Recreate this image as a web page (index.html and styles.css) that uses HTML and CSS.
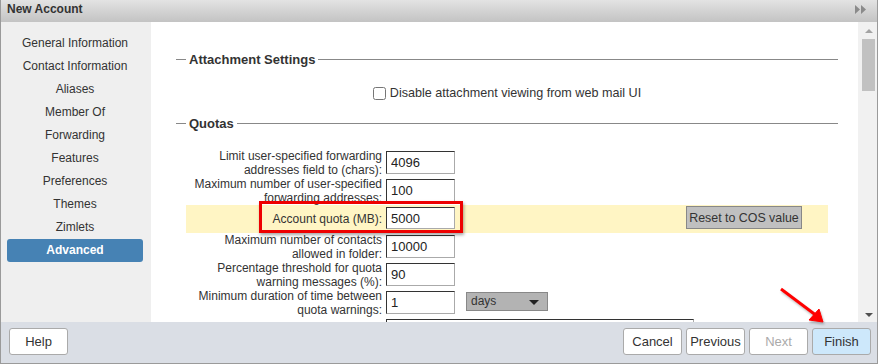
FILE: index.html
```html
<!DOCTYPE html>
<html lang="en">
<head>
    <meta charset="UTF-8">
    <title>New Account</title>
    <link rel="stylesheet" href="styles.css">
</head>
<body>
    <div class="dialog">
        <div class="titlebar">
            <span class="title">New Account</span>
            <svg class="expand" width="12" height="9" viewBox="0 0 12 9"><path d="M0 0 L5 4.5 L0 9 Z M6 0 L11 4.5 L6 9 Z" fill="#8a8a8a"/></svg>
        </div>
        <div class="main">
            <ul class="sidebar">
                <li>General Information</li>
                <li>Contact Information</li>
                <li>Aliases</li>
                <li>Member Of</li>
                <li>Forwarding</li>
                <li>Features</li>
                <li>Preferences</li>
                <li>Themes</li>
                <li>Zimlets</li>
                <li class="active">Advanced</li>
            </ul>
            <div class="content">
                <div class="section-head"><span class="dash"></span><span class="legend">Attachment Settings</span><span class="rule"></span></div>
                <label class="check-row"><input type="checkbox"> Disable attachment viewing from web mail UI</label>
                <div class="section-head"><span class="dash"></span><span class="legend">Quotas</span><span class="rule"></span></div>
                <div class="form">
                    <div class="row">
                        <div class="label">Limit user-specified forwarding<br>addresses field to (chars):</div>
                        <div class="field"><input class="num" value="4096"></div>
                        <div class="extra"></div>
                    </div>
                    <div class="row">
                        <div class="label">Maximum number of user-specified<br>forwarding addresses:</div>
                        <div class="field"><input class="num" value="100"></div>
                        <div class="extra"></div>
                    </div>
                    <div class="row highlight">
                        <div class="label">Account quota (MB):</div>
                        <div class="field"><input class="num" value="5000"></div>
                        <div class="extra"><button class="reset">Reset to COS value</button></div>
                    </div>
                    <div class="row">
                        <div class="label">Maximum number of contacts<br>allowed in folder:</div>
                        <div class="field"><input class="num" value="10000"></div>
                        <div class="extra"></div>
                    </div>
                    <div class="row">
                        <div class="label">Percentage threshold for quota<br>warning messages (%):</div>
                        <div class="field"><input class="num" value="90"></div>
                        <div class="extra"></div>
                    </div>
                    <div class="row">
                        <div class="label">Minimum duration of time between<br>quota warnings:</div>
                        <div class="field"><input class="num" value="1"></div>
                        <div class="extra"><div class="select">days<span class="caret"></span></div></div>
                    </div>
                    <div class="row">
                        <div class="label"></div>
                        <div class="field wide"><input class="long" value=""></div>
                    </div>
                </div>
            </div>
            <div class="scrollbar">
                <span class="arrow-up"></span>
                <span class="thumb"></span>
                <span class="spacer"></span>
                <span class="arrow-down"></span>
            </div>
        </div>
        <div class="footer">
            <button class="btn">Help</button>
            <div class="nav">
                <button class="btn">Cancel</button>
                <button class="btn">Previous</button>
                <button class="btn disabled">Next</button>
                <button class="btn primary">Finish</button>
            </div>
        </div>

        <div class="callout"></div>
        <svg class="pointer" width="60" height="45" viewBox="0 0 60 45">
            <g fill="#f00" stroke="#f00">
                <line x1="2" y1="2" x2="38" y2="29" stroke-width="3"/>
                <path d="M44 35 L30 33 L40 22 Z" stroke-width="1"/>
            </g>
        </svg>
    </div>
</body>
</html>
```
FILE: styles.css
```css
* {
    box-sizing: border-box;
}
body {
    margin: 0;
    font-family: "Liberation Sans", Arial, sans-serif;
    font-size: 12px;
    color: #333;
    background: #fff;
}
.dialog {
    position: relative;
    width: 878px;
    height: 364px;
    display: flex;
    flex-direction: column;
    border: 1px solid #9a9a9a;
    border-top: none;
    overflow: hidden;
}
.titlebar {
    height: 22px;
    flex: none;
    display: flex;
    align-items: center;
    justify-content: space-between;
    padding: 0 10px 0 6px;
    background: linear-gradient(#e3e3e3, #c3c3c3);
}
.title {
    font-weight: bold;
    font-size: 12px;
    color: #333;
    margin-top: -4px;
}
.expand {
    margin-top: -3px;
}
.main {
    height: 300px;
    flex: none;
    display: flex;
}
.sidebar {
    list-style: none;
    margin: 0;
    padding: 10px 0 0;
    width: 150px;
    flex: none;
    background: #efefef;
}
.sidebar li {
    height: 23px;
    line-height: 22px;
    margin: 0 8px 0 6px;
    text-align: center;
    color: #333;
}
.sidebar li.active {
    background: #4682b4;
    color: #fff;
    font-weight: bold;
    border-radius: 3px;
}
.content {
    flex: 1;
    overflow: hidden;
    padding: 28px 20px 0 25px;
}
.section-head {
    display: flex;
    align-items: center;
    height: 18px;
}
.section-head .dash {
    width: 10px;
    border-top: 1px solid #888;
}
.section-head .rule {
    flex: 1;
    border-top: 1px solid #888;
}
.legend {
    font-weight: bold;
    font-size: 13px;
    color: #333;
    padding: 0 3px;
}
.check-row {
    display: flex;
    align-items: center;
    justify-content: center;
    height: 20px;
    margin: 15px 0 11px;
    font-size: 12.6px;
    color: #333;
}
.check-row input {
    width: 13px;
    height: 13px;
    margin: 0 4px 0 0;
}
.form {
    margin: 17px 10px 0 10px;
}
.row {
    display: flex;
    height: 28px;
}
.row.highlight {
    background: #fff5c4;
    position: relative;
}
.label {
    width: 196px;
    flex: none;
    text-align: right;
    line-height: 14px;
    white-space: nowrap;
    color: #333;
}
.highlight .label {
    line-height: 28px;
}
.field {
    width: 70px;
    flex: none;
    margin-left: 4px;
    padding-top: 2px;
}
.field.wide {
    width: 310px;
}
.num, .long {
    width: 69px;
    height: 23px;
    font-family: "Liberation Sans", Arial, sans-serif;
    font-size: 13px;
    color: #222;
    padding: 0 4px;
    border: 1px solid #aaa;
    border-top-color: #333;
    border-left-color: #333;
    background: #fff;
}
.highlight .num {
    height: 22px;
}
.long {
    width: 308px;
}
.extra {
    flex: 1;
    display: flex;
    padding-top: 1px;
}
.highlight .extra {
    justify-content: flex-end;
    padding-right: 26px;
}
.reset {
    height: 23px;
    width: 116px;
    padding: 0;
    white-space: nowrap;
    font-family: "Liberation Sans", Arial, sans-serif;
    font-size: 12.4px;
    color: #333;
    background: #c0c0c0;
    border: 1px solid #888;
}
.select {
    position: relative;
    margin: 2px 0 0 10px;
    width: 82px;
    height: 19px;
    line-height: 17px;
    padding-left: 4px;
    background: #b3b3b3;
    border: 1px solid #888;
    color: #333;
}
.caret {
    position: absolute;
    right: 8px;
    top: 7px;
    border-left: 5px solid transparent;
    border-right: 5px solid transparent;
    border-top: 5px solid #222;
}
.scrollbar {
    width: 19px;
    flex: none;
    background: #f1f1f1;
    display: flex;
    flex-direction: column;
    align-items: center;
    padding: 7px 0 5px 2px;
}
.arrow-up, .arrow-down {
    width: 0;
    height: 0;
    border-left: 4px solid transparent;
    border-right: 4px solid transparent;
}
.arrow-up {
    border-bottom: 4px solid #a3a3a3;
    margin-bottom: 6px;
}
.arrow-down {
    border-top: 4px solid #505050;
}
.thumb {
    width: 13px;
    height: 52px;
    background: #c1c1c1;
}
.spacer {
    flex: 1;
}
.footer {
    flex: 1;
    display: flex;
    justify-content: space-between;
    align-items: center;
    padding: 0 6px 2px 8px;
    background: #dadee5;
}
.nav {
    display: flex;
    gap: 4px;
}
.btn {
    width: 59px;
    height: 27px;
    padding: 0;
    font-family: "Liberation Sans", Arial, sans-serif;
    font-size: 13px;
    color: #333;
    background: #fff;
    border: 1px solid #aaa;
    border-radius: 3px;
}
.btn.disabled {
    color: #aaa;
}
.btn.primary {
    background: #cde8fb;
}
.callout {
    position: absolute;
    left: 258px;
    top: 201px;
    width: 204px;
    height: 32px;
    border: 3px solid #ee0000;
    box-shadow: 1px 2px 3px rgba(0, 0, 0, 0.35);
}
.pointer {
    position: absolute;
    left: 778px;
    top: 287px;
    filter: drop-shadow(1px 2px 1px rgba(0, 0, 0, 0.25));
}
```
